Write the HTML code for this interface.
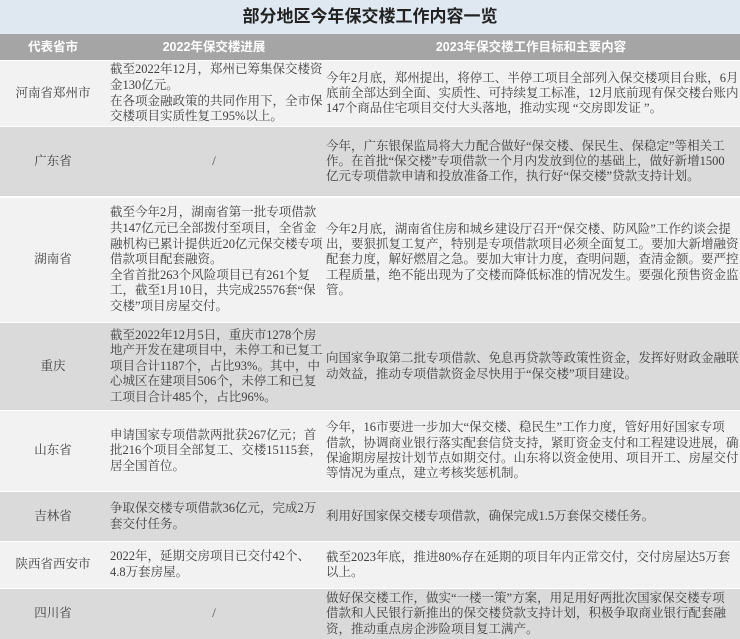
<!DOCTYPE html>
<html><head><meta charset="utf-8"><style>
*{margin:0;padding:0;box-sizing:border-box}
body{width:740px;height:637px;overflow:hidden;background:#fff;font-family:"Liberation Serif","Noto Serif CJK SC",serif;color:#404040}
.t{position:absolute;left:0;top:0;width:740px;height:34px;background:#dfe8f1;text-align:center;font:bold 17px/34px "Liberation Sans","Noto Sans CJK SC",sans-serif;color:#222}
.h{position:absolute;top:34px;height:26px;background:#a5a5a5;color:#fff;font:bold 12.5px/26px "Liberation Sans","Noto Sans CJK SC",sans-serif;text-align:center}
.r{position:absolute;left:0;width:740px}
.l{background:#f2f2f2}.d{background:#dadada}
.c1,.c2,.c3{position:absolute;top:0;height:100%;display:flex;align-items:center;font-size:12.5px;line-height:15.3px;white-space:nowrap}
.c1{left:0;width:106px;justify-content:center}
.c2{left:110px;width:212px;line-height:15.6px}
.c3{left:326px;width:414px}
.s{justify-content:center;left:106px;width:216px}
</style></head><body>
<div class="t">部分地区今年保交楼工作内容一览</div>
<div class="h" style="left:0;width:106px">代表省市</div>
<div class="h" style="left:106px;width:216px">2022年保交楼进展</div>
<div class="h" style="left:322px;width:418px">2023年保交楼工作目标和主要内容</div>

<div class="r l" style="top:61px;height:65px"><div class="c1">河南省郑州市</div><div class="c2"><div>截至2022年12月，郑州已筹集保交楼资<br>金130亿元。<br>在各项金融政策的共同作用下，全市保<br>交楼项目实质性复工95%以上。</div></div><div class="c3"><div>今年2月底，郑州提出，将停工、半停工项目全部列入保交楼项目台账，6月<br>底前全部达到全面、实质性、可持续复工标准，12月底前现有保交楼台账内<br>147个商品住宅项目交付大头落地，推动实现 “交房即发证 ”。</div></div></div>

<div class="r d" style="top:127px;height:69px"><div class="c1">广东省</div><div class="c2 s">/</div><div class="c3"><div>今年，广东银保监局将大力配合做好“保交楼、保民生、保稳定”等相关工<br>作。在首批“保交楼”专项借款一个月内发放到位的基础上，做好新增1500<br>亿元专项借款申请和投放准备工作，执行好“保交楼”贷款支持计划。</div></div></div>

<div class="r l" style="top:198px;height:124px"><div class="c1">湖南省</div><div class="c2"><div>截至今年2月，湖南省第一批专项借款<br>共147亿元已全部拨付至项目，全省金<br>融机构已累计提供近20亿元保交楼专项<br>借款项目配套融资。<br>全省首批263个风险项目已有261个复<br>工，截至1月10日，共完成25576套“保<br>交楼”项目房屋交付。</div></div><div class="c3"><div>今年2月底，湖南省住房和城乡建设厅召开“保交楼、防风险”工作约谈会提<br>出，要狠抓复工复产，特别是专项借款项目必须全面复工。要加大新增融资<br>配套力度，解好燃眉之急。要加大审计力度，查明问题，查清金额。要严控<br>工程质量，绝不能出现为了交楼而降低标准的情况发生。要强化预售资金监<br>管。</div></div></div>

<div class="r d" style="top:323px;height:87px"><div class="c1">重庆</div><div class="c2"><div>截至2022年12月5日，重庆市1278个房<br>地产开发在建项目中，未停工和已复工<br>项目合计1187个，占比93%。其中，中<br>心城区在建项目506个，未停工和已复<br>工项目合计485个，占比96%。</div></div><div class="c3"><div>向国家争取第二批专项借款、免息再贷款等政策性资金，发挥好财政金融联<br>动效益，推动专项借款资金尽快用于“保交楼”项目建设。</div></div></div>

<div class="r l" style="top:411px;height:80px"><div class="c1">山东省</div><div class="c2"><div>申请国家专项借款两批获267亿元；首<br>批216个项目全部复工、交楼15115套，<br>居全国首位。</div></div><div class="c3"><div>今年，16市要进一步加大“保交楼、稳民生”工作力度，管好用好国家专项<br>借款，协调商业银行落实配套信贷支持，紧盯资金支付和工程建设进展，确<br>保逾期房屋按计划节点如期交付。山东将以资金使用、项目开工、房屋交付<br>等情况为重点，建立考核奖惩机制。</div></div></div>

<div class="r d" style="top:492px;height:49px"><div class="c1">吉林省</div><div class="c2"><div>争取保交楼专项借款36亿元，完成2万<br>套交付任务。</div></div><div class="c3"><div>利用好国家保交楼专项借款，确保完成1.5万套保交楼任务。</div></div></div>

<div class="r l" style="top:542px;height:46px"><div class="c1">陕西省西安市</div><div class="c2"><div>2022年，延期交房项目已交付42个、<br>4.8万套房屋。</div></div><div class="c3"><div>截至2023年底，推进80%存在延期的项目年内正常交付，交付房屋达5万套<br>以上。</div></div></div>

<div class="r d" style="top:589px;height:50px"><div class="c1">四川省</div><div class="c2 s">/</div><div class="c3"><div>做好保交楼工作，做实“一楼一策”方案，用足用好两批次国家保交楼专项<br>借款和人民银行新推出的保交楼贷款支持计划，积极争取商业银行配套融<br>资，推动重点房企涉险项目复工满产。</div></div></div>
</body></html>
